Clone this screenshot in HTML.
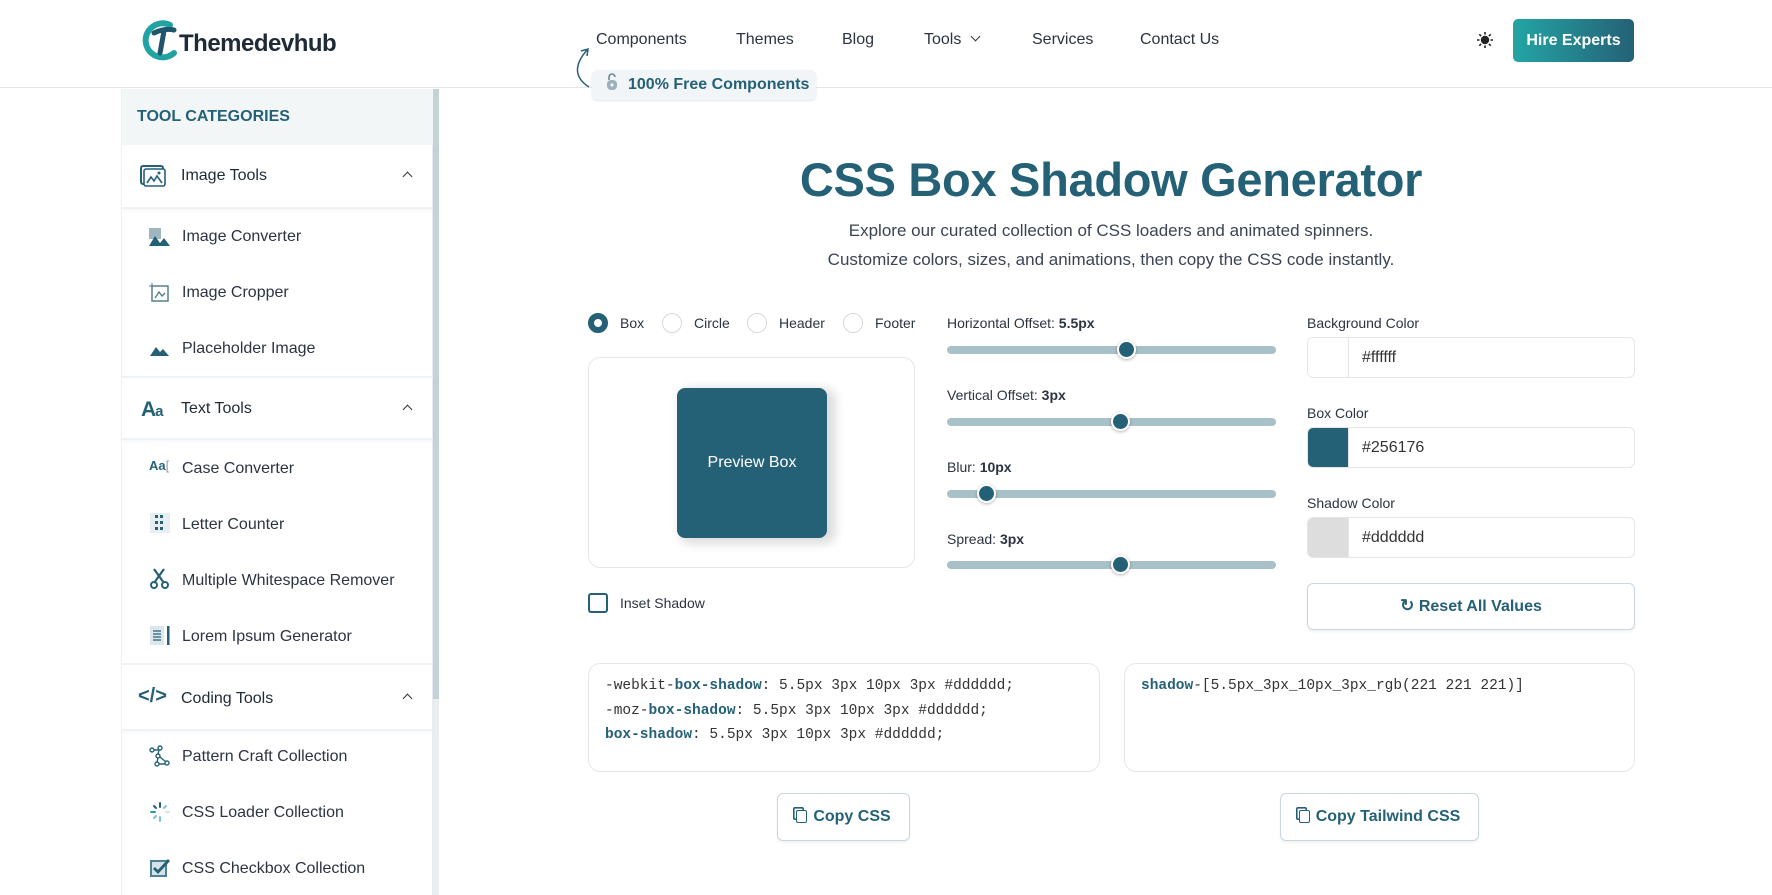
<!DOCTYPE html>
<html><head><meta charset="utf-8"><style>
*{box-sizing:border-box;margin:0;padding:0}
body{width:1772px;height:895px;overflow:hidden;background:#fff;font-family:"Liberation Sans",sans-serif;color:#2b3440;position:relative}
.a{position:absolute}
.nav{font-size:16px;color:#2b3440;top:31px}
.side{left:121px;top:89px;width:312px;height:806px;border-right:1px solid #e8ecef;border-left:1px solid #eef1f3}
.item{position:absolute;left:60px;font-size:16px;color:#2b3440}
.ico{position:absolute;left:27px}
.cat{position:absolute;left:0;width:311px;height:64px;border-bottom:2px solid #f0f3f5;box-shadow:0 2px 3px rgba(0,0,0,.03)}
.cat span{position:absolute;left:59px;top:22px;font-size:16px;color:#1f2a37}
.cat i{position:absolute;right:22px;top:28px;width:7px;height:7px;border-left:1.6px solid #333;border-top:1.6px solid #333;transform:rotate(45deg)}
.lbl{font-size:14px;color:#2b3440}
.track{position:absolute;left:947px;width:329px;height:8px;border-radius:4px;background:#a8c0c8}
.thumb{position:absolute;width:19px;height:19px;border-radius:50%;background:#256176;border:2px solid #fff;box-shadow:0 1px 3px rgba(0,0,0,.3)}
.inp{position:absolute;left:1307px;width:328px;height:41px;border:1px solid #e3e7ea;border-radius:6px;font-size:16px}
.inp b{position:absolute;left:0;top:0;width:41px;height:39px;border-right:1px solid #e3e7ea;border-radius:5px 0 0 5px}
.inp span{position:absolute;left:54px;top:11px;font-weight:normal;color:#333}
.radio{position:absolute;top:313px;width:20px;height:20px;border-radius:50%;border:1.5px solid #d5dadd}
.code{position:absolute;top:663px;height:109px;border:1px solid #e3e7ea;border-radius:12px;font-family:"Liberation Mono",monospace;font-size:14.5px;line-height:24.5px;padding:10px 16px;color:#333}
.code b{color:#256176}
.btn{position:absolute;border:1.5px solid #c9d6dc;border-radius:6px;font-size:16px;font-weight:bold;color:#256176;text-align:center;box-shadow:0 2px 2px rgba(0,0,0,.05)}
.cp{display:inline-block;width:11px;height:13px;border:1.6px solid #256176;border-radius:2px;position:relative;vertical-align:-2px;margin-right:6px;box-shadow:-3px -3px 0 -1.6px #fff,-3px -3px 0 0 #256176}
</style></head><body>
<!-- header -->
<div class="a" style="left:0;top:87px;width:1772px;height:1px;background:#e5e7eb"></div>
<svg class="a" style="left:140px;top:19px" width="44" height="44" viewBox="0 0 44 44"><path d="M30 6 A17 17 0 1 0 34 34" fill="none" stroke="#21a3a3" stroke-width="6" stroke-linecap="round"/><path d="M14 14 Q24 9 34 11 M24 12 L20 34" fill="none" stroke="#20566a" stroke-width="5" stroke-linecap="round"/></svg>
<div class="a" style="left:179px;top:30px;font-size:24px;font-weight:bold;color:#1f2a37;letter-spacing:-.5px">Themedevhub</div>
<div class="a nav" style="left:596px">Components</div>
<div class="a nav" style="left:736px">Themes</div>
<div class="a nav" style="left:842px">Blog</div>
<div class="a nav" style="left:924px">Tools <span style="display:inline-block;width:7px;height:7px;border-right:1.5px solid #333;border-bottom:1.5px solid #333;transform:rotate(45deg);margin:0 0 4px 6px"></span></div>
<div class="a nav" style="left:1032px">Services</div>
<div class="a nav" style="left:1140px">Contact Us</div>
<svg class="a" style="left:565px;top:45px" width="30" height="45" viewBox="0 0 30 45"><path d="M24 42 Q2 28 22 5" fill="none" stroke="#256176" stroke-width="1.5"/><path d="M16 6 L23 4 L22 11" fill="none" stroke="#256176" stroke-width="1.5"/></svg>
<div class="a" style="left:592px;top:70px;width:224px;height:30px;background:#f1f5f7;border-radius:6px;box-shadow:0 1px 2px rgba(0,0,0,.12)"></div>
<svg class="a" style="left:605px;top:72px" width="14" height="20" viewBox="0 0 14 20"><path d="M4 8 V5 A3 3 0 0 1 10 5" fill="none" stroke="#6b8a96" stroke-width="1.6"/><rect x="2" y="8" width="10" height="10" rx="4" fill="#9cb2bb"/><circle cx="7" cy="13" r="1.5" fill="#fff"/></svg>
<div class="a" style="left:628px;top:76px;font-size:16px;font-weight:bold;color:#256176">100% Free Components</div>
<svg class="a" style="left:1476px;top:31px" width="18" height="18" viewBox="0 0 18 18"><circle cx="9" cy="9" r="4.2" fill="#222"/><g stroke="#222" stroke-width="1.6"><path d="M9 1v2.5M9 14.5V17M1 9h2.5M14.5 9H17M3.3 3.3l1.8 1.8M12.9 12.9l1.8 1.8M3.3 14.7l1.8-1.8M12.9 5.1l1.8-1.8"/></g></svg>
<div class="a" style="left:1513px;top:19px;width:121px;height:43px;border-radius:5px;background:linear-gradient(90deg,#23a5a5,#256176);color:#fff;font-size:16px;font-weight:bold;text-align:center;line-height:43px">Hire Experts</div>

<!-- sidebar -->
<div class="a side">
 <div class="a" style="left:0;top:0;width:311px;height:56px;background:#f2f6f7"></div>
 <div class="a" style="left:15px;top:19px;font-size:16px;font-weight:bold;color:#256176">TOOL CATEGORIES</div>
 <div class="a" style="left:311px;top:0;width:6px;height:806px;background:#e9eef0"></div>
 <div class="a" style="left:311px;top:0;width:6px;height:610px;background:#c5d3d8"></div>
 <div class="cat" style="top:56px"><svg class="ico" style="left:18px;top:20px" width="26" height="22" viewBox="0 0 26 22"><rect x="1" y="1" width="22" height="18" rx="2" fill="none" stroke="#256176" stroke-width="2"/><rect x="4" y="4" width="21" height="17" rx="2" fill="#fff" stroke="#256176" stroke-width="1.6"/><path d="M7 18 L11 12 L14 16 L17 11 L22 18" fill="none" stroke="#256176" stroke-width="1.6"/><circle cx="19" cy="8" r="1.5" fill="#256176"/></svg><span>Image Tools</span><i></i></div>
 <svg class="ico" style="top:139px" width="22" height="20" viewBox="0 0 22 20"><rect x="0" y="0" width="12" height="11" fill="#9fb6bf"/><path d="M0 18 L6 8 L11 15 L15 10 L21 18Z" fill="#256176"/></svg><div class="item" style="top:139px">Image Converter</div>
 <svg class="ico" style="top:194px" width="22" height="20" viewBox="0 0 22 20"><rect x="3" y="3" width="16" height="15" fill="none" stroke="#4d7886" stroke-width="1.4"/><path d="M6 15 L10 9 L13 13 L16 10" fill="none" stroke="#4d7886" stroke-width="1.3"/><path d="M3 0v3M0 3h3" stroke="#4d7886"/></svg><div class="item" style="top:195px">Image Cropper</div>
 <svg class="ico" style="top:252px" width="22" height="16" viewBox="0 0 22 16"><path d="M1 15 L7 6 L11 11 L14 8 L20 15Z" fill="#256176"/></svg><div class="item" style="top:251px">Placeholder Image</div>
 <div class="cat" style="top:287px;border-top:2px solid #f0f3f5"><div style="position:absolute;left:19px;top:20px;font-size:21px;color:#256176;font-weight:bold;letter-spacing:-1px">A<span style="position:static;font-size:15px;color:#256176">a</span></div><span>Text Tools</span><i></i></div>
 <div class="ico" style="top:369px;font-size:13px;font-weight:bold;color:#256176">Aa<span style="font-weight:normal;color:#999">[</span></div><div class="item" style="top:371px">Case Converter</div>
 <svg class="ico" style="top:423px" width="22" height="22" viewBox="0 0 22 22"><rect x="1" y="1" width="20" height="20" fill="#e7eef1"/><g fill="#256176"><rect x="6" y="3" width="3" height="3"/><rect x="11" y="3" width="3" height="3"/><rect x="6" y="9" width="3" height="3"/><rect x="11" y="9" width="3" height="3"/><rect x="6" y="15" width="3" height="3"/><rect x="11" y="15" width="3" height="3"/></g></svg><div class="item" style="top:427px">Letter Counter</div>
 <svg class="ico" style="top:479px" width="22" height="22" viewBox="0 0 22 22"><path d="M5 1 L15 15 M15 1 L5 15" stroke="#256176" stroke-width="2.2"/><circle cx="5" cy="17" r="3" fill="none" stroke="#256176" stroke-width="2"/><circle cx="16" cy="17" r="3" fill="none" stroke="#256176" stroke-width="2"/></svg><div class="item" style="top:483px">Multiple Whitespace Remover</div>
 <svg class="ico" style="top:535px" width="22" height="22" viewBox="0 0 22 22"><rect x="1" y="2" width="14" height="19" fill="#dde6ea"/><path d="M4 7h8M4 10h8M4 13h8M4 16h8" stroke="#256176" stroke-width="1.3"/><rect x="18" y="2" width="2.5" height="19" fill="#256176"/></svg><div class="item" style="top:539px">Lorem Ipsum Generator</div>
 <div class="cat" style="top:574px;border-top:2px solid #f0f3f5;height:68px"><div style="position:absolute;left:16px;top:20px;font-size:20px;color:#256176;font-weight:bold">&lt;/&gt;</div><span style="top:25px">Coding Tools</span><i style="top:30px"></i></div>
 <svg class="ico" style="top:656px" width="22" height="22" viewBox="0 0 22 22"><g fill="none" stroke="#256176" stroke-width="1.4"><circle cx="3" cy="5" r="2"/><circle cx="11" cy="3" r="2"/><circle cx="9" cy="11" r="2"/><circle cx="8" cy="19" r="2"/><circle cx="18" cy="18" r="2"/><path d="M5 5h4M10 5l-1 4M9 13l-1 4M11 12l6 5M10 19h6"/></g></svg><div class="item" style="top:659px">Pattern Craft Collection</div>
 <svg class="ico" style="top:712px" width="22" height="22" viewBox="0 0 22 22"><g stroke-width="2" stroke-linecap="round"><path d="M11 2v4" stroke="#256176"/><path d="M17 5l-2 2" stroke="#7cc4d0"/><path d="M20 11h-3" stroke="#cfe6ea"/><path d="M11 16v4" stroke="#7cc4d0"/><path d="M5 17l2-2" stroke="#7cc4d0"/><path d="M2 11h4" stroke="#21a3b3"/><path d="M5 5l2 2" stroke="#256176"/></g></svg><div class="item" style="top:715px">CSS Loader Collection</div>
 <svg class="ico" style="top:768px" width="22" height="22" viewBox="0 0 22 22"><rect x="1" y="3" width="17" height="17" fill="#4d8296"/><rect x="3" y="5" width="13" height="13" fill="#d5e2e7"/><path d="M5 11 L9 15 L20 3" fill="none" stroke="#256176" stroke-width="2.8"/></svg><div class="item" style="top:771px">CSS Checkbox Collection</div>
</div>

<!-- main -->
<div class="a" style="left:438px;top:152px;width:1346px;text-align:center;font-size:47px;font-weight:bold;color:#256176;letter-spacing:-.3px">CSS Box Shadow Generator</div>
<div class="a" style="left:438px;top:216px;width:1346px;text-align:center;font-size:17px;color:#3b4452;line-height:29px">Explore our curated collection of CSS loaders and animated spinners.<br>Customize colors, sizes, and animations, then copy the CSS code instantly.</div>

<div class="radio" style="left:588px;border:6px solid #256176"></div><div class="a lbl" style="left:620px;top:315px">Box</div>
<div class="radio" style="left:662px"></div><div class="a lbl" style="left:694px;top:315px">Circle</div>
<div class="radio" style="left:747px"></div><div class="a lbl" style="left:779px;top:315px">Header</div>
<div class="radio" style="left:843px"></div><div class="a lbl" style="left:875px;top:315px">Footer</div>

<div class="a" style="left:588px;top:357px;width:327px;height:211px;border:1px solid #e3e7ea;border-radius:12px"></div>
<div class="a" style="left:677px;top:388px;width:150px;height:150px;background:#256176;border-radius:8px;box-shadow:5.5px 3px 10px 3px #dddddd;color:#fff;font-size:16px;text-align:center;line-height:150px">Preview Box</div>
<div class="a" style="left:588px;top:593px;width:20px;height:20px;border:2px solid #256176;border-radius:3px"></div>
<div class="a lbl" style="left:620px;top:595px">Inset Shadow</div>

<div class="a lbl" style="left:947px;top:315px">Horizontal Offset: <b>5.5px</b></div>
<div class="track" style="top:346px"></div><div class="thumb" style="left:1117px;top:340px"></div>
<div class="a lbl" style="left:947px;top:387px">Vertical Offset: <b>3px</b></div>
<div class="track" style="top:418px"></div><div class="thumb" style="left:1111px;top:412px"></div>
<div class="a lbl" style="left:947px;top:459px">Blur: <b>10px</b></div>
<div class="track" style="top:490px"></div><div class="thumb" style="left:977px;top:484px"></div>
<div class="a lbl" style="left:947px;top:531px">Spread: <b>3px</b></div>
<div class="track" style="top:561px"></div><div class="thumb" style="left:1111px;top:555px"></div>

<div class="a lbl" style="left:1307px;top:315px">Background Color</div>
<div class="inp" style="top:337px"><b style="background:#fff"></b><span>#ffffff</span></div>
<div class="a lbl" style="left:1307px;top:405px">Box Color</div>
<div class="inp" style="top:427px"><b style="background:#256176"></b><span>#256176</span></div>
<div class="a lbl" style="left:1307px;top:495px">Shadow Color</div>
<div class="inp" style="top:517px"><b style="background:#dddddd"></b><span>#dddddd</span></div>
<div class="btn" style="left:1307px;top:583px;width:328px;height:47px;line-height:44px"><span style="font-size:17px">&#8635;</span> Reset All Values</div>

<div class="code" style="left:588px;width:512px"><span>-webkit-<b>box-shadow</b>: 5.5px 3px 10px 3px #dddddd;</span><br>-moz-<b>box-shadow</b>: 5.5px 3px 10px 3px #dddddd;<br><b>box-shadow</b>: 5.5px 3px 10px 3px #dddddd;</div>
<div class="code" style="left:1124px;width:511px"><b>shadow</b>-[5.5px_3px_10px_3px_rgb(221 221 221)]</div>

<div class="btn" style="left:777px;top:793px;width:133px;height:48px;line-height:45px"><span class="cp"></span>Copy CSS</div>
<div class="btn" style="left:1280px;top:793px;width:199px;height:48px;line-height:45px"><span class="cp"></span>Copy Tailwind CSS</div>
</body></html>
